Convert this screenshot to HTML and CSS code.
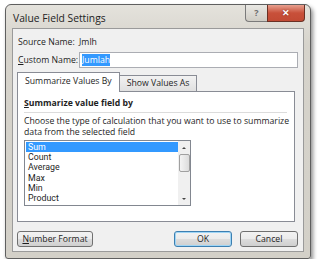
FILE: index.html
```html
<!DOCTYPE html>
<html lang="en">
<head>
    <meta charset="UTF-8">
    <title>Value Field Settings</title>
    <link rel="stylesheet" href="styles.css">
</head>
<body>
    <div class="window">
        <div class="titlebar">
            <span class="title">Value Field Settings</span>
            <div class="caption-buttons">
                <span class="cap-btn help">?</span>
                <span class="cap-btn close">&#x2715;</span>
            </div>
        </div>
        <div class="client">
            <div class="row">
                <span class="label">Source Name:</span>
                <span>Jmlh</span>
            </div>
            <div class="row">
                <span class="label"><u>C</u>ustom Name:</span>
                <div class="textbox"><span class="sel">Jumlah</span></div>
            </div>

            <div class="tabs">
                <div class="tab active">Summarize Values By</div>
                <div class="tab">Show Values As</div>
            </div>
            <div class="panel">
                <div class="group-title"><u>S</u>ummarize value field by</div>
                <p class="desc">Choose the type of calculation that you want to use to summarize data from the selected field</p>
                <div class="listbox">
                    <ul class="items">
                        <li class="selected">Sum</li>
                        <li>Count</li>
                        <li>Average</li>
                        <li>Max</li>
                        <li>Min</li>
                        <li>Product</li>
                    </ul>
                    <div class="scrollbar">
                        <span class="arrow up"></span>
                        <span class="thumb"></span>
                        <span class="arrow down"></span>
                    </div>
                </div>
            </div>

            <div class="buttons">
                <button class="btn wide"><u>N</u>umber Format</button>
                <button class="btn default">OK</button>
                <button class="btn">Cancel</button>
            </div>
        </div>
    </div>
</body>
</html>
```

FILE: styles.css
```css
body {
    margin: 0;
    background: #fff;
    font-family: "Open Sans", "Noto Sans", sans-serif;
    font-size: 8.7px;
    color: #1e1e1e;
}
.window {
    width: 304px;
    height: 253px;
    margin: 4px 0 0 5px;
    background: linear-gradient(#e4e2dc, #d6d3cb 40px, #d3d0c8);
    border: 1px solid #5f5f5f;
    border-radius: 6px 6px 3px 3px;
    box-shadow: 2px 3px 4px rgba(0,0,0,0.45);
    display: flex;
    flex-direction: column;
}
.titlebar {
    height: 23px;
    display: flex;
    align-items: flex-start;
    padding-left: 7px;
}
.title {
    font-size: 10.3px;
    margin-top: 6px;
    color: #222;
}
.caption-buttons {
    margin-left: auto;
    margin-right: 5px;
    display: flex;
}
.cap-btn {
    height: 16px;
    border: 1px solid #7a7a7a;
    border-top: none;
    color: #fff;
    font-size: 9px;
    font-weight: bold;
    text-align: center;
    line-height: 15px;
}
.help {
    width: 21px;
    background: linear-gradient(#e9e8e4, #cfccc4);
    color: #6c6c6c;
    border-radius: 0 0 0 4px;
    border-right: none;
}
.close {
    width: 36px;
    background: linear-gradient(#e8a08f, #c8503a 50%, #c24a34);
    border-color: #6a3024;
    border-radius: 0 0 4px 0;
    text-shadow: 0 0 2px #7a2a1a;
}
.client {
    flex: 1;
    margin: 0 6px 6px 6px;
    background: #f0f0f0;
    border: 1px solid #9a9a9a;
    padding: 4px 5px 0 4px;
    display: flex;
    flex-direction: column;
}
.row {
    display: flex;
    align-items: center;
    height: 18px;
}
.label {
    width: 61px;
    padding-left: 1px;
}
.textbox {
    flex: 1;
    height: 14px;
    background: #fff;
    border: 1px solid #abadb3;
    display: flex;
    align-items: center;
    padding-left: 2px;
}
.sel {
    background: #3399ff;
    color: #fff;
    line-height: 12px;
}
.tabs {
    display: flex;
    align-items: flex-end;
    margin-top: 2px;
    height: 20px;
}
.tab {
    height: 15px;
    padding: 0 7px;
    border: 1px solid #898c95;
    border-bottom: none;
    background: linear-gradient(#f2f2f2, #e0e0e0);
    line-height: 15px;
}
.tab.active {
    height: 19px;
    background: #fff;
    line-height: 17px;
    margin-right: -1px;
    position: relative;
    z-index: 1;
    margin-bottom: -1px;
}
.panel {
    height: 124px;
    background: #fff;
    border: 1px solid #898c95;
    margin-right: 3px;
    padding: 5px 1px 0 6px;
}
.group-title {
    font-weight: bold;
    padding-bottom: 3px;
    border-bottom: 1px solid #dcdcdc;
    margin-right: 6px;
}
.desc {
    margin: 3px 0 2px;
    line-height: 11px;
}
.listbox {
    width: 165px;
    height: 64px;
    border: 1px solid #828790;
    display: flex;
}
.items {
    list-style: none;
    margin: 0;
    padding: 1px 0 0 1px;
    flex: 1;
    font-family: Roboto, "Liberation Sans", sans-serif;
    font-size: 8.8px;
}
.items li {
    height: 10.2px;
    line-height: 10.2px;
    padding-left: 2px;
}
.items li.selected {
    background: #3399ff;
    color: #fff;
}
.scrollbar {
    width: 12px;
    background: #f0f0f0;
    display: flex;
    flex-direction: column;
    align-items: center;
}
.arrow {
    width: 0;
    height: 0;
    border-left: 2px solid transparent;
    border-right: 2px solid transparent;
    margin: 6px 0 5px;
}
.arrow.up {
    border-bottom: 2px solid #444;
}
.arrow.down {
    border-top: 2px solid #444;
    margin-top: auto;
}
.thumb {
    width: 9px;
    height: 16px;
    border: 1px solid #a0a0a0;
    border-radius: 2px;
    background: linear-gradient(90deg, #f4f4f4, #dcdcdc);
}
.buttons {
    display: flex;
    margin-top: 9px;
    padding-left: 0;
}
.btn {
    font: inherit;
    color: #1e1e1e;
    height: 16px;
    width: 58px;
    padding: 0;
    border: 1px solid #707070;
    border-radius: 3px;
    background: linear-gradient(#f2f2f2, #ebebeb 50%, #dddddd 50%, #cfcfcf);
    margin-left: 8px;
}
.btn.wide {
    width: 76px;
    margin-left: 0;
    margin-right: auto;
}
.btn.default {
    border-color: #3c7fb1;
    box-shadow: inset 0 0 0 1px #9fd5f5;
}
```
